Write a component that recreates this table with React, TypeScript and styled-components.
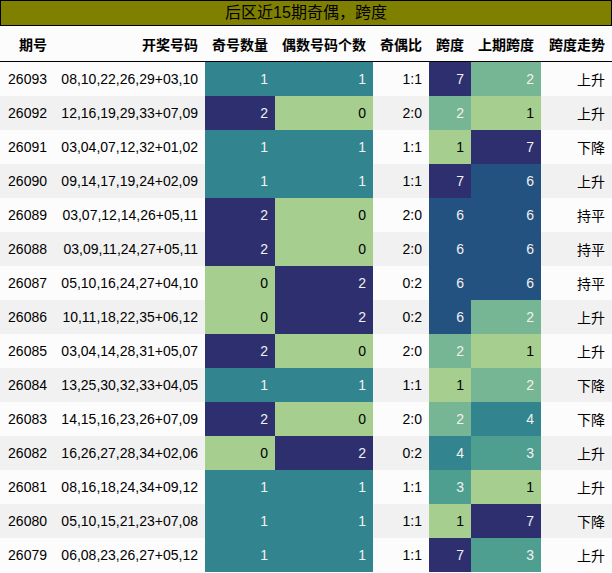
import React from "react";
import styled, { createGlobalStyle } from "styled-components";

const Global = createGlobalStyle`
  html, body { margin: 0; padding: 0; background: #ffffff; }
  body { font-family: "Liberation Sans", "Noto Sans CJK SC", sans-serif; }
`;

const Wrap = styled.div`
  width: 612px;
  display: flex;
  flex-direction: column;
`;

const Title = styled.div`
  height: 24px;
  border: 1px solid #000;
  background: #808000;
  color: #000;
  font-size: 16px;
  line-height: 24px;
  text-align: center;
`;

const Table = styled.table`
  width: 612px;
  border-collapse: collapse;
  table-layout: fixed;
  font-size: 14px;
`;

const HeadCell = styled.th`
  height: 35px;
  padding: 0 7px 0 0;
  text-align: right;
  font-weight: bold;
  color: #000;
  background: #fcfcfc;
  border-bottom: 1px solid #000;
  white-space: nowrap;
  vertical-align: middle;
`;

const Row = styled.tr<{ $alt: boolean }>`
  background: ${(p) => (p.$alt ? "#f1f1f1" : "#fcfcfc")};
`;

const Cell = styled.td<{ $bg?: string; $light?: boolean }>`
  height: 34px;
  padding: 0 7px 0 0;
  text-align: right;
  white-space: nowrap;
  vertical-align: middle;
  color: ${(p) => (p.$light ? "#f1f1f1" : "#000")};
  background: ${(p) => p.$bg ?? "transparent"};
`;

const widths = [54, 151, 70, 98, 56, 42, 70, 71];
const headers = ["期号", "开奖号码", "奇号数量", "偶数号码个数", "奇偶比", "跨度", "上期跨度", "跨度走势"];

type R = [string, string, number, number, string, number, number, string];
const rows: R[] = [
  ["26093", "08,10,22,26,29+03,10", 1, 1, "1:1", 7, 2, "上升"],
  ["26092", "12,16,19,29,33+07,09", 2, 0, "2:0", 2, 1, "上升"],
  ["26091", "03,04,07,12,32+01,02", 1, 1, "1:1", 1, 7, "下降"],
  ["26090", "09,14,17,19,24+02,09", 1, 1, "1:1", 7, 6, "上升"],
  ["26089", "03,07,12,14,26+05,11", 2, 0, "2:0", 6, 6, "持平"],
  ["26088", "03,09,11,24,27+05,11", 2, 0, "2:0", 6, 6, "持平"],
  ["26087", "05,10,16,24,27+04,10", 0, 2, "0:2", 6, 6, "持平"],
  ["26086", "10,11,18,22,35+06,12", 0, 2, "0:2", 6, 2, "上升"],
  ["26085", "03,04,14,28,31+05,07", 2, 0, "2:0", 2, 1, "上升"],
  ["26084", "13,25,30,32,33+04,05", 1, 1, "1:1", 1, 2, "下降"],
  ["26083", "14,15,16,23,26+07,09", 2, 0, "2:0", 2, 4, "下降"],
  ["26082", "16,26,27,28,34+02,06", 0, 2, "0:2", 4, 3, "上升"],
  ["26081", "08,16,18,24,34+09,12", 1, 1, "1:1", 3, 1, "上升"],
  ["26080", "05,10,15,21,23+07,08", 1, 1, "1:1", 1, 7, "下降"],
  ["26079", "06,08,23,26,27+05,12", 1, 1, "1:1", 7, 3, "上升"],
];

// crest-like palette sampled by fraction (0..1)
const palette: [number, string, boolean][] = [
  [0, "#a6ce8f", false],
  [1 / 6, "#76b694", true],
  [2 / 6, "#4f9f91", true],
  [3 / 6, "#32858e", true],
  [5 / 6, "#245280", true],
  [1, "#2d2f6e", true],
];

function colorFor(v: number, min: number, max: number): { bg: string; light: boolean } {
  const f = (v - min) / (max - min);
  let best = palette[0];
  let d = 9;
  for (const p of palette) {
    const dd = Math.abs(p[0] - f);
    if (dd < d) {
      d = dd;
      best = p;
    }
  }
  return { bg: best[1], light: best[2] };
}

export default function App() {
  return (
    <>
      <Global />
      <Wrap>
        <Title>后区近15期奇偶，跨度</Title>
        <Table>
          <colgroup>
            {widths.map((w, i) => (
              <col key={i} style={{ width: w }} />
            ))}
          </colgroup>
          <thead>
            <tr>
              {headers.map((h) => (
                <HeadCell key={h}>{h}</HeadCell>
              ))}
            </tr>
          </thead>
          <tbody>
            {rows.map((r, i) => {
              const a = colorFor(r[2], 0, 2);
              const b = colorFor(r[3], 0, 2);
              const c = colorFor(r[5], 1, 7);
              const d = colorFor(r[6], 1, 7);
              return (
                <Row key={r[0]} $alt={i % 2 === 1}>
                  <Cell>{r[0]}</Cell>
                  <Cell>{r[1]}</Cell>
                  <Cell $bg={a.bg} $light={a.light}>{r[2]}</Cell>
                  <Cell $bg={b.bg} $light={b.light}>{r[3]}</Cell>
                  <Cell>{r[4]}</Cell>
                  <Cell $bg={c.bg} $light={c.light}>{r[5]}</Cell>
                  <Cell $bg={d.bg} $light={d.light}>{r[6]}</Cell>
                  <Cell>{r[7]}</Cell>
                </Row>
              );
            })}
          </tbody>
        </Table>
      </Wrap>
    </>
  );
}
